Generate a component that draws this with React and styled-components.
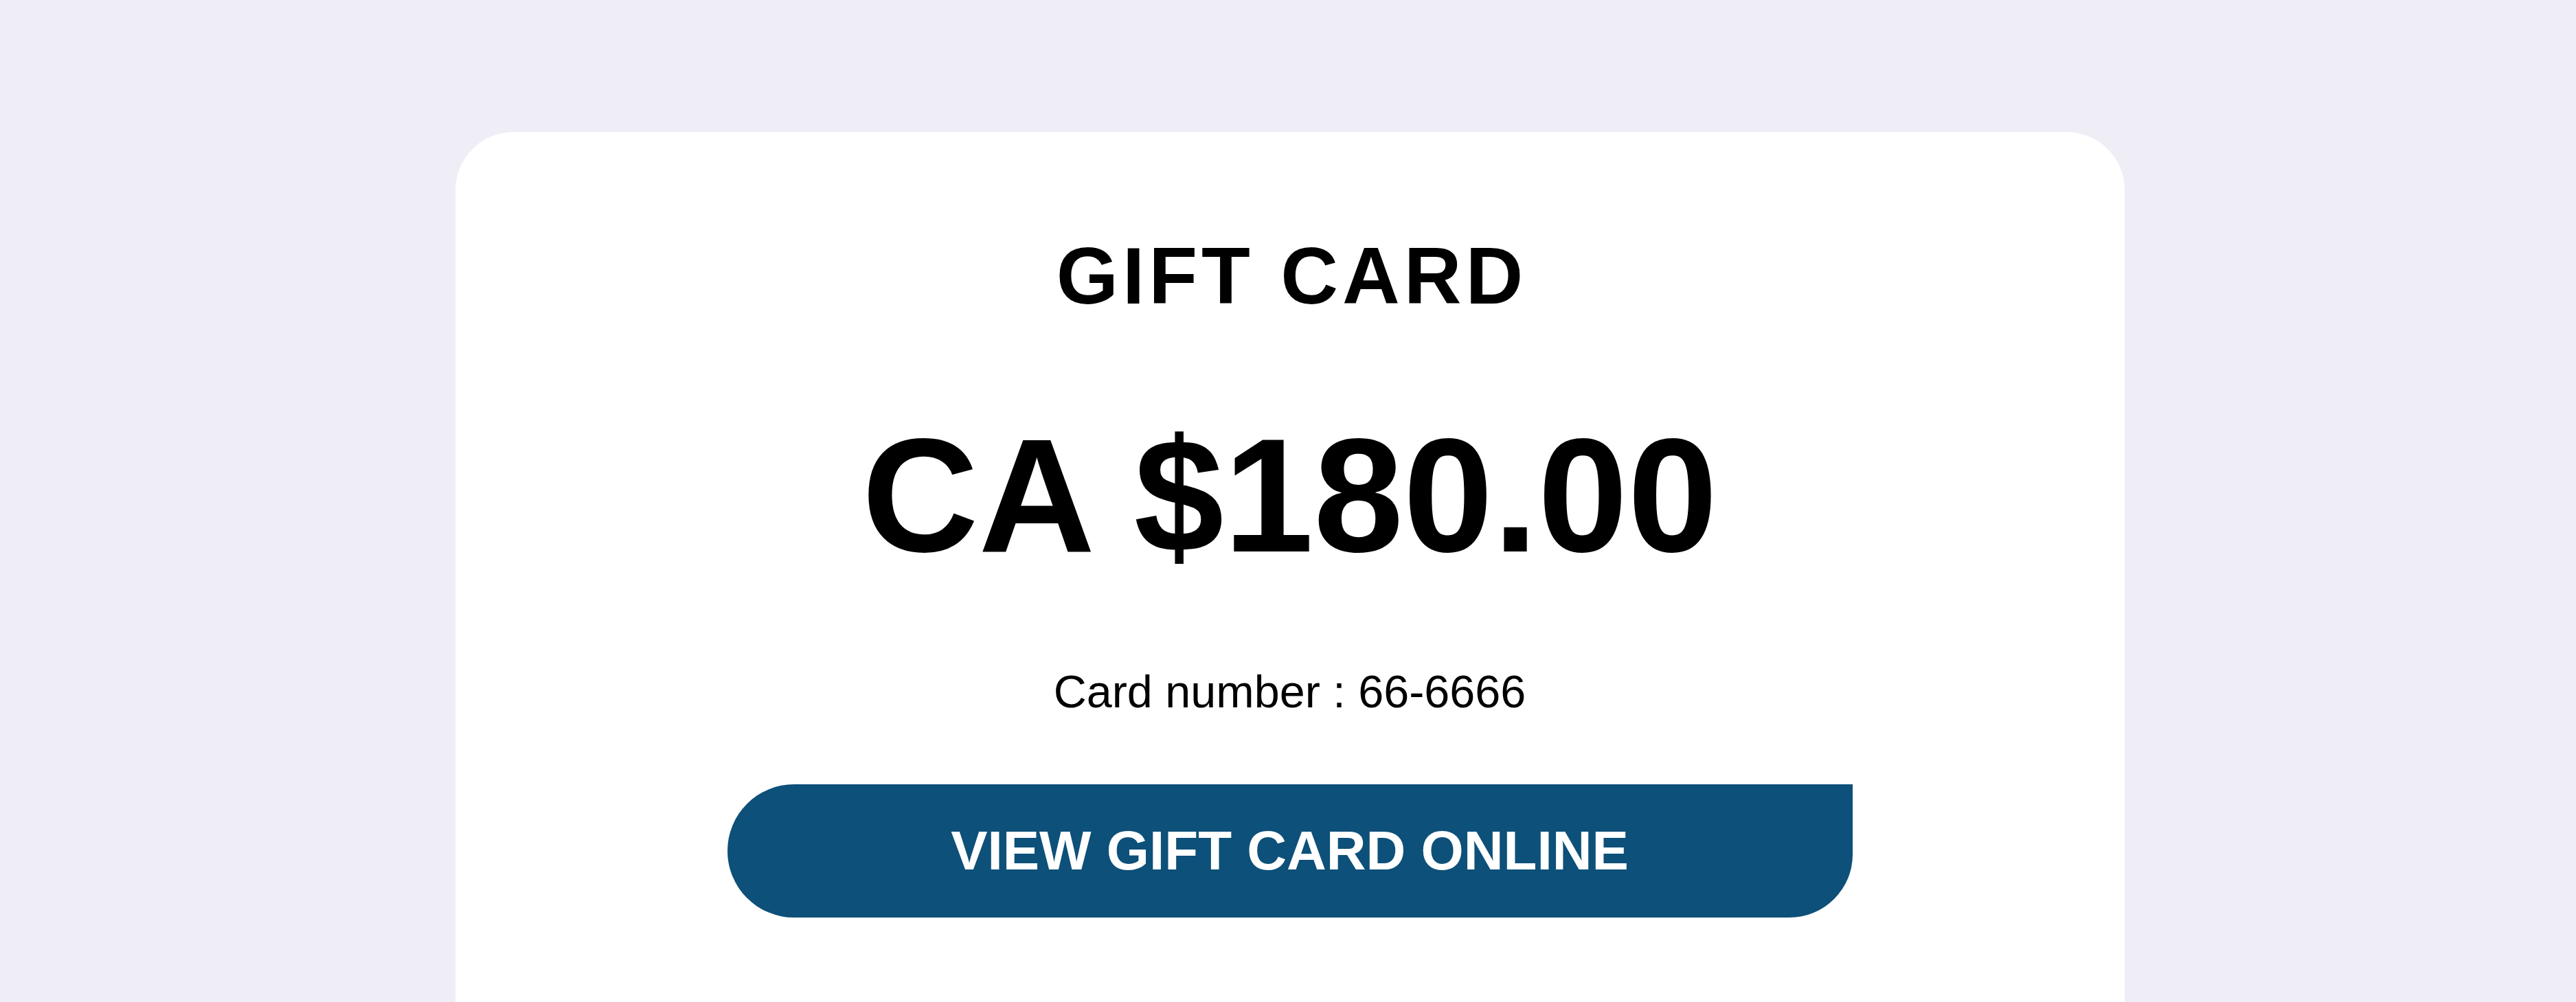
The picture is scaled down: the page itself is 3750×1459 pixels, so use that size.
import React from "react";
import styled, { createGlobalStyle } from "styled-components";

const GlobalStyle = createGlobalStyle`
  html, body {
    margin: 0;
    padding: 0;
    height: 100%;
    overflow: hidden;
    background-color: #efeef7;
    font-family: "Liberation Sans", Arial, Helvetica, sans-serif;
  }
`;

const Page = styled.div`
  display: flex;
  justify-content: center;
  padding: 192px 0 0 5px;
  height: 100vh;
  box-sizing: border-box;
`;

const Card = styled.div`
  width: 2430px;
  height: 100%;
  background-color: #fff;
  border-radius: 85px 85px 0 0;
  display: flex;
  flex-direction: column;
  align-items: center;
  padding-top: 140px;
  box-sizing: border-box;
`;

const Title = styled.div`
  font-size: 116px;
  line-height: 140px;
  font-weight: 700;
  letter-spacing: 6px;
  padding-left: 6px;
  color: #000;
`;

const Amount = styled.div`
  margin-top: 110px;
  font-size: 235px;
  line-height: 280px;
  font-weight: 700;
  color: #000;
`;

const CardNumber = styled.div`
  margin-top: 103px;
  font-size: 66.5px;
  line-height: 84px;
  color: #000;
`;

const ViewButton = styled.a`
  margin-top: 93px;
  width: 1638px;
  height: 194px;
  flex-shrink: 0;
  display: flex;
  align-items: center;
  justify-content: center;
  background-color: #0d5079;
  color: #fff;
  font-size: 80px;
  font-weight: 700;
  text-decoration: none;
  border-radius: 97px 0 92px 97px;
  cursor: pointer;
`;

export default function App() {
  return (
    <>
      <GlobalStyle />
      <Page>
        <Card>
          <Title>GIFT CARD</Title>
          <Amount>CA $180.00</Amount>
          <CardNumber>Card number : 66-6666</CardNumber>
          <ViewButton>VIEW GIFT CARD ONLINE</ViewButton>
        </Card>
      </Page>
    </>
  );
}
